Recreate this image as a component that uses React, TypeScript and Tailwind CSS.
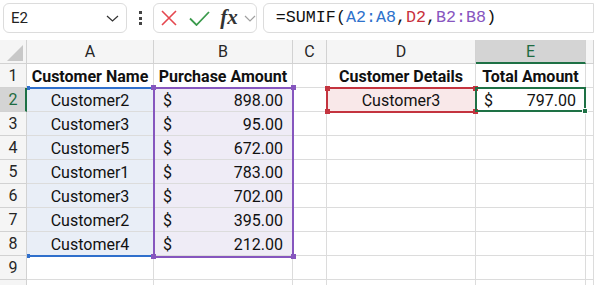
import React from "react";

const cell = "border-r border-b border-[#dcdcdc] flex items-end leading-[20px] overflow-hidden whitespace-nowrap";
const hdr = "border-r border-b border-[#d2d2d2] bg-[#f5f5f5] flex items-end justify-center pb-[1px] leading-[20px] text-[#262626]";

const data: [string, string][] = [
  ["Customer2", "898.00"],
  ["Customer3", "95.00"],
  ["Customer5", "672.00"],
  ["Customer1", "783.00"],
  ["Customer3", "702.00"],
  ["Customer2", "395.00"],
  ["Customer4", "212.00"],
];

function RowHeader({ n, active }: { n?: number; active?: boolean }) {
  return active ? (
    <div className="border-r-2 border-b border-r-[#1e7145] border-b-[#d2d2d2] bg-[#d4d4d4] flex items-end justify-center pb-[1px] pl-[1px] leading-[20px] text-[#1e6b41]">
      {n}
    </div>
  ) : (
    <div className={hdr}>{n}</div>
  );
}

function Empty({ n }: { n: number }) {
  return (
    <>
      {Array.from({ length: n }).map((_, i) => (
        <div key={i} className={cell} />
      ))}
    </>
  );
}

export default function App() {
  return (
    <div className="w-[594px] h-[285px] overflow-hidden bg-white font-['Roboto',sans-serif] text-[16px] text-[#111]">
      {/* toolbar */}
      <div className="h-[40px] flex items-start pt-[3px] pl-[3px] bg-white">
        <div className="w-[127px] h-[30px] rounded-[6px] border border-[#dcdcdc] bg-white flex items-center justify-between pl-[7px] pr-[7px]">
          <span className="text-[15px] text-[#222]">E2</span>
          <svg width="13" height="7" viewBox="0 0 13 7" className="mt-[1px]">
            <path d="M1 1 L6.5 6 L12 1" fill="none" stroke="#333" strokeWidth="1.2" />
          </svg>
        </div>
        <div className="w-[26px] h-[30px] flex flex-col items-center justify-center gap-[2.5px] ml-[1px]">
          <div className="w-[3px] h-[3px] bg-[#444]" />
          <div className="w-[3px] h-[3px] bg-[#444]" />
          <div className="w-[3px] h-[3px] bg-[#444]" />
        </div>
        <div className="w-[106px] h-[30px] rounded-[6px] border border-[#dcdcdc] bg-white flex items-center pl-[6px]">
          <svg width="16" height="16" viewBox="0 0 16 16" className="ml-[1px]">
            <path d="M1 1 L15 15 M15 1 L1 15" stroke="#e5474f" strokeWidth="1.6" fill="none" />
          </svg>
          <svg width="21" height="15" viewBox="0 0 21 15" className="ml-[12px]">
            <path d="M1 7.5 L7.5 14 L20 1" stroke="#3b9a4c" strokeWidth="1.8" fill="none" />
          </svg>
          <span className="ml-[10px] font-['Liberation_Serif',serif] italic font-bold text-[21px] leading-none text-[#333] mt-[-2px]">fx</span>
          <svg width="12" height="7" viewBox="0 0 12 7" className="ml-[6px] mt-[1px]">
            <path d="M1 1 L6 6 L11 1" fill="none" stroke="#a0a0a0" strokeWidth="1.2" />
          </svg>
        </div>
        <div className="ml-[6px] w-[340px] h-[30px] rounded-l-[6px] border border-[#dcdcdc] bg-white flex items-center pl-[12px] font-['Liberation_Mono',monospace] text-[16.7px] text-[#111] whitespace-nowrap">
          <span>=SUMIF(</span>
          <span className="text-[#2e72cc]">A2:A8</span>
          <span>,</span>
          <span className="text-[#c8303c]">D2</span>
          <span>,</span>
          <span className="text-[#8856c0]">B2:B8</span>
          <span>)</span>
        </div>
      </div>

      {/* grid */}
      <div className="relative">
        <div className="grid grid-cols-[27px_127px_139px_34px_149px_110px_1fr] auto-rows-[24px]">
          {/* column headers */}
          <div className="border-r border-b border-[#d2d2d2] bg-[#f5f5f5] relative">
            <svg width="27" height="24" viewBox="0 0 27 24" className="absolute left-0 top-0">
              <polygon points="7,21 23,21 23,5" fill="#c8c8c8" />
            </svg>
          </div>
          <div className={hdr}>A</div>
          <div className={hdr}>B</div>
          <div className={hdr}>C</div>
          <div className={hdr}>D</div>
          <div className="border-r border-b-2 border-r-[#d2d2d2] border-b-[#1e7145] bg-[#d4d4d4] flex items-end justify-center leading-[20px] text-[#1e6b41]">
            E
          </div>
          <div className={hdr} />

          {/* row 1 */}
          <RowHeader n={1} />
          <div className={cell + " justify-center font-bold"}>Customer Name</div>
          <div className={cell + " justify-center font-bold"}>Purchase Amount</div>
          <div className={cell} />
          <div className={cell + " justify-center font-bold"}>Customer Details</div>
          <div className={cell + " justify-center font-bold"}>Total Amount</div>
          <div className={cell} />

          {data.map(([name, amt], i) => (
            <React.Fragment key={i}>
              <RowHeader n={i + 2} active={i === 0} />
              <div className={cell + " justify-center bg-[#e9eef7]"}>{name}</div>
              <div className={cell + " justify-between pl-[9px] pr-[9px] bg-[#efecf6]"}>
                <span>$</span>
                <span>{amt}</span>
              </div>
              <div className={cell} />
              {i === 0 ? (
                <>
                  <div className={cell + " justify-center bg-[#f9e8e9]"}>Customer3</div>
                  <div className={cell + " justify-between pl-[8px] pr-[9px]"}>
                    <span>$</span>
                    <span>797.00</span>
                  </div>
                </>
              ) : (
                <Empty n={2} />
              )}
              <div className={cell} />
            </React.Fragment>
          ))}

          <RowHeader n={9} />
          <Empty n={6} />
          <RowHeader />
          <Empty n={6} />
        </div>

        {/* range overlays */}
        {/* blue A2:A8 */}
        <div className="absolute left-[28px] top-[47px] w-[125px] h-[2px] bg-[#2f6fcc]" />
        <div className="absolute left-[28px] top-[215px] w-[125px] h-[2px] bg-[#2f6fcc]" />
        <div className="absolute left-[27px] top-[46px] w-[3px] h-[4px] bg-[#2f6fcc]" />
        <div className="absolute left-[27px] top-[214px] w-[3px] h-[4px] bg-[#2f6fcc]" />

        {/* purple B2:B8 */}
        <div className="absolute left-[153px] top-[47px] w-[141px] h-[171px] border-2 border-[#8656be]" />
        <div className="absolute left-[151px] top-[45px] w-[5px] h-[5px] bg-[#8656be]" />
        <div className="absolute left-[291px] top-[45px] w-[5px] h-[5px] bg-[#8656be]" />
        <div className="absolute left-[151px] top-[214px] w-[5px] h-[5px] bg-[#8656be]" />
        <div className="absolute left-[291px] top-[214px] w-[5px] h-[5px] bg-[#8656be]" />

        {/* red D2 */}
        <div className="absolute left-[326px] top-[47px] w-[151px] h-[26px] border-2 border-[#c4343f]" />
        <div className="absolute left-[325px] top-[46px] w-[5px] h-[5px] bg-[#c4343f]" />
        <div className="absolute left-[473px] top-[46px] w-[5px] h-[5px] bg-[#c4343f]" />
        <div className="absolute left-[325px] top-[69px] w-[5px] h-[5px] bg-[#c4343f]" />
        <div className="absolute left-[473px] top-[69px] w-[5px] h-[5px] bg-[#c4343f]" />

        {/* green E2 selection */}
        <div className="absolute left-[475px] top-[47px] w-[111px] h-[25px] border-2 border-[#1e7145]" />
        <div className="absolute left-[582px] top-[68px] w-[6px] h-[6px] bg-[#1e7145] border border-white" />
      </div>
    </div>
  );
}
